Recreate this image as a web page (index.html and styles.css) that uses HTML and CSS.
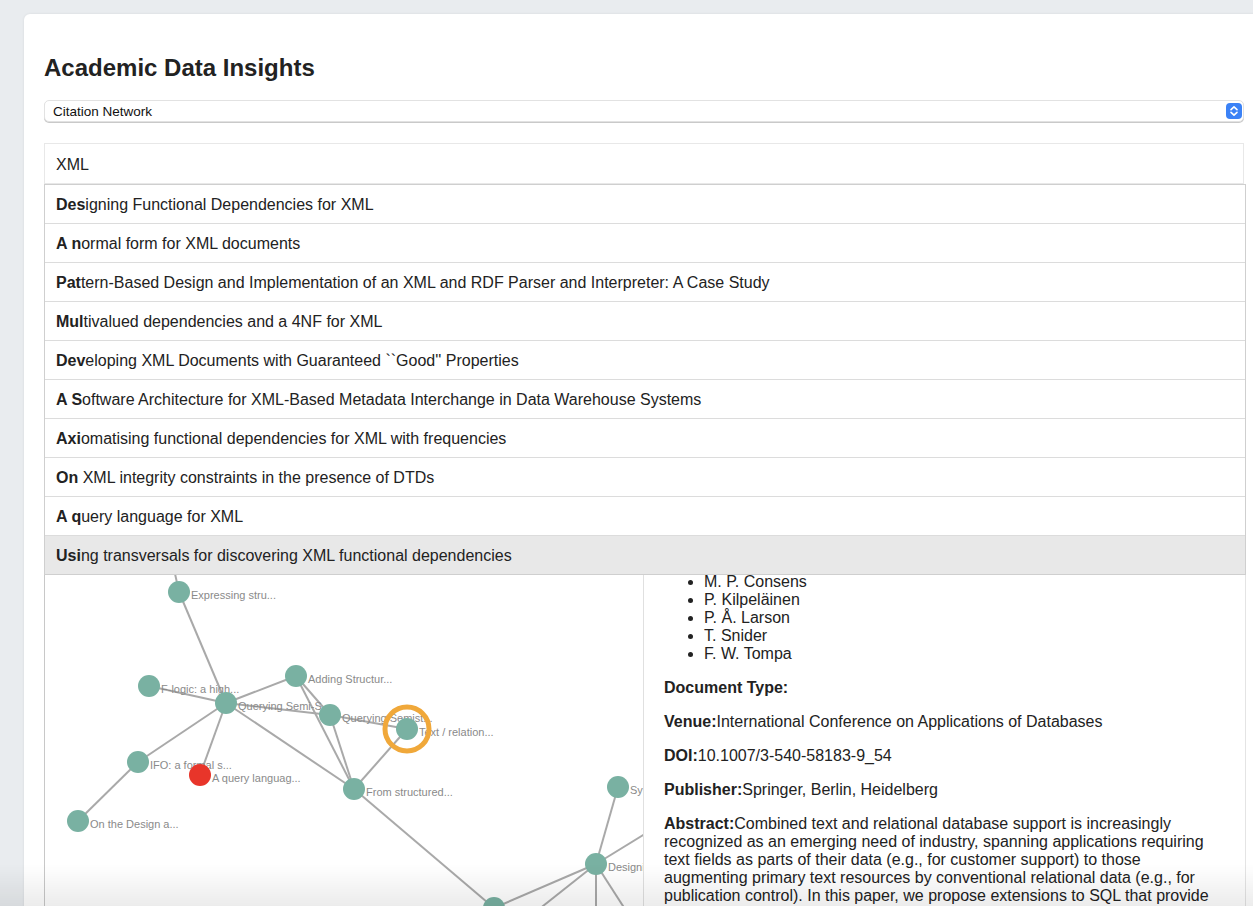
FILE: index.html
```html
<!DOCTYPE html>
<html lang="en">
<head>
<meta charset="utf-8">
<title>Academic Data Insights</title>
<link rel="stylesheet" href="styles.css">
</head>
<body>
<div class="card">
  <h1 class="title">Academic Data Insights</h1>

  <div class="select-wrap">
    <select class="view-select">
      <option>Citation Network</option>
      <option>Author Collaboration</option>
      <option>Topic Trends</option>
    </select>
    <span class="select-icon">
      <svg width="16" height="16" viewBox="0 0 16 16">
        <rect x="0" y="0" width="16" height="16" rx="4" fill="#3b82f6"/>
        <path d="M5 6.6 L8 3.8 L11 6.6" fill="none" stroke="#fff" stroke-width="1.6" stroke-linecap="round" stroke-linejoin="round"/>
        <path d="M5 9.4 L8 12.2 L11 9.4" fill="none" stroke="#fff" stroke-width="1.6" stroke-linecap="round" stroke-linejoin="round"/>
      </svg>
    </span>
  </div>

  <div class="search">
    <input class="search-input" type="text" value="XML">
    <ul class="suggestions">
      <li class="suggestion"><b>Des</b>igning Functional Dependencies for XML</li>
      <li class="suggestion"><b>A n</b>ormal form for XML documents</li>
      <li class="suggestion"><b>Pat</b>tern-Based Design and Implementation of an XML and RDF Parser and Interpreter: A Case Study</li>
      <li class="suggestion"><b>Mul</b>tivalued dependencies and a 4NF for XML</li>
      <li class="suggestion"><b>Dev</b>eloping XML Documents with Guaranteed ``Good'' Properties</li>
      <li class="suggestion"><b>A S</b>oftware Architecture for XML-Based Metadata Interchange in Data Warehouse Systems</li>
      <li class="suggestion"><b>Axi</b>omatising functional dependencies for XML with frequencies</li>
      <li class="suggestion"><b>On </b>XML integrity constraints in the presence of DTDs</li>
      <li class="suggestion"><b>A q</b>uery language for XML</li>
      <li class="suggestion suggestion-active"><b>Usi</b>ng transversals for discovering XML functional dependencies</li>
    </ul>
  </div>

  <div class="panels">
    <div class="graph-panel">
      <svg class="graph" width="598" height="758" viewBox="0 0 598 758">
        <g transform="translate(-45 -201)">
          <g class="links">
            <line x1="160" y1="505" x2="179" y2="592"/>
            <line x1="179" y1="592" x2="226" y2="703"/>
            <line x1="149" y1="686" x2="226" y2="703"/>
            <line x1="226" y1="703" x2="296" y2="676"/>
            <line x1="226" y1="703" x2="330" y2="715"/>
            <line x1="226" y1="703" x2="138" y2="762"/>
            <line x1="226" y1="703" x2="200" y2="775"/>
            <line x1="226" y1="703" x2="354" y2="789"/>
            <line x1="296" y1="676" x2="330" y2="715"/>
            <line x1="296" y1="676" x2="354" y2="789"/>
            <line x1="330" y1="715" x2="354" y2="789"/>
            <line x1="330" y1="715" x2="407" y2="729"/>
            <line x1="407" y1="729" x2="354" y2="789"/>
            <line x1="138" y1="762" x2="78" y2="821"/>
            <line x1="354" y1="789" x2="494" y2="908"/>
            <line x1="494" y1="908" x2="596" y2="864"/>
            <line x1="494" y1="908" x2="450" y2="980"/>
            <line x1="596" y1="864" x2="618" y2="787"/>
            <line x1="596" y1="864" x2="700" y2="800"/>
            <line x1="596" y1="864" x2="490" y2="948"/>
            <line x1="596" y1="864" x2="596" y2="980"/>
            <line x1="596" y1="864" x2="650" y2="948"/>
          </g>
          <g class="labels">
            <text x="172" y="513">Semistructured...</text>
            <text x="191" y="599">Expressing stru...</text>
            <text x="161" y="693">F-logic: a high...</text>
            <text x="238" y="710">Querying Semi-S...</text>
            <text x="308" y="683">Adding Structur...</text>
            <text x="342" y="722">Querying Semist...</text>
            <text x="419" y="736">Text / relation...</text>
            <text x="366" y="796">From structured...</text>
            <text x="150" y="769">IFO: a formal s...</text>
            <text x="212" y="782">A query languag...</text>
            <text x="90" y="828">On the Design a...</text>
            <text x="630" y="794">Syntax and sem...</text>
            <text x="608" y="871">Designing Func...</text>
            <text x="506" y="915">XML-based dat...</text>
          </g>
          <g class="nodes">
            <circle cx="160" cy="505" r="11"/>
            <circle cx="179" cy="592" r="11"/>
            <circle cx="149" cy="686" r="11"/>
            <circle cx="226" cy="703" r="11"/>
            <circle cx="296" cy="676" r="11"/>
            <circle cx="330" cy="715" r="11"/>
            <circle cx="407" cy="729" r="11"/>
            <circle cx="354" cy="789" r="11"/>
            <circle cx="138" cy="762" r="11"/>
            <circle class="node-query" cx="200" cy="775" r="11"/>
            <circle cx="78" cy="821" r="11"/>
            <circle cx="618" cy="787" r="11"/>
            <circle cx="596" cy="864" r="11"/>
            <circle cx="494" cy="908" r="11"/>
            <circle class="node-ring" cx="407" cy="729" r="22"/>
          </g>
        </g>
      </svg>
    </div>

    <div class="details-panel">
      <h2 class="details-title">Text / Relational Database Management Systems: Harmonizing SQL and SGML</h2>
      <p><b>Year:</b>1994</p>
      <p><b>Citations:</b>10</p>
      <p><b>References:</b>8</p>
      <p><b>Pages:</b>583-594</p>
      <p><b>Volume:</b>819</p>
      <p><b>Language:</b>en</p>
      <p><b>Keywords:</b>SQL, SGML</p>
      <p><b>Authors:</b></p>
      <ul class="authors">
        <li>G. E. Blake</li>
        <li>M. P. Consens</li>
        <li>P. Kilpeläinen</li>
        <li>P. Å. Larson</li>
        <li>T. Snider</li>
        <li>F. W. Tompa</li>
      </ul>
      <p><b>Document Type:</b></p>
      <p><b>Venue:</b>International Conference on Applications of Databases</p>
      <p><b>DOI:</b>10.1007/3-540-58183-9_54</p>
      <p><b>Publisher:</b>Springer, Berlin, Heidelberg</p>
      <p><b>Abstract:</b>Combined text and relational database support is increasingly recognized as an emerging need of industry, spanning applications requiring text fields as parts of their data (e.g., for customer support) to those augmenting primary text resources by conventional relational data (e.g., for publication control). In this paper, we propose extensions to SQL that provide flexible and efficient access to structured documents and their component parts, while preserving the familiar relational view of data.</p>
    </div>
  </div>
</div>
<div class="bottom-shade"></div>
</body>
</html>
```

FILE: styles.css
```css
html {
  overflow: hidden;
}

body {
  margin: 0;
  background: #e9ecef;
  font-family: "Liberation Sans", Arial, Helvetica, sans-serif;
  color: #222;
}

.card {
  box-sizing: border-box;
  width: 1240px;
  margin: 14px 0 0 24px;
  padding: 20px;
  background: #fff;
  border-radius: 6px;
  box-shadow: 0 0 3px rgba(0, 0, 0, 0.08);
}

.title {
  margin: 20px 0 18px;
  font-size: 24px;
  line-height: 28px;
  font-weight: bold;
  color: #222;
}

.select-wrap {
  position: relative;
  margin-bottom: 21px;
}

.view-select {
  -webkit-appearance: none;
  appearance: none;
  display: block;
  box-sizing: border-box;
  width: 100%;
  height: 22px;
  margin: 0;
  padding: 1px 8px 0;
  border: 1px solid #e2e2e2;
  border-radius: 5px;
  box-shadow: 0 1px 0 #c9c9c9;
  background: #fff;
  font-family: "Liberation Sans", Arial, sans-serif;
  font-size: 13.5px;
  color: #111;
}

.select-icon {
  position: absolute;
  top: 3px;
  right: 2px;
  width: 16px;
  height: 16px;
  pointer-events: none;
}

.select-icon svg {
  display: block;
}

.search {
  position: relative;
}

.search-input {
  display: block;
  box-sizing: border-box;
  width: 100%;
  height: 41px;
  margin: 0;
  padding: 2px 11px 0;
  border: 1px solid #e8e8e8;
  border-radius: 0;
  outline: none;
  background: #fff;
  font-family: "Liberation Sans", Arial, sans-serif;
  font-size: 16px;
  color: #222;
}

.suggestions {
  position: absolute;
  top: 100%;
  left: 0;
  width: 100%;
  margin: 0;
  padding: 0;
  list-style: none;
  background: #fff;
  border: 1px solid #cfcfcf;
  z-index: 10;
}

.suggestion {
  padding: 11px 11px 9px;
  font-size: 16px;
  line-height: 18px;
  color: #222;
  border-bottom: 1px solid #dcdcdc;
  white-space: nowrap;
}

.suggestion:last-child {
  border-bottom: none;
}

.suggestion-active {
  background: #e8e8e8;
}

.panels {
  display: flex;
  margin-top: 16px;
  margin-right: -2px;
  height: 760px;
}

.graph-panel {
  flex: none;
  box-sizing: border-box;
  width: 600px;
  border: 1px solid #c8c8c8;
  border-right-color: #e0e0e0;
  overflow: hidden;
}

.graph {
  display: block;
}

.links line {
  stroke: #a9a9a9;
  stroke-width: 2;
}

.labels text {
  font-family: "Liberation Sans", Arial, sans-serif;
  font-size: 11px;
  fill: #8a8a8a;
}

.nodes circle {
  fill: #79b1a2;
}

.nodes .node-query {
  fill: #e8352a;
}

.nodes .node-ring {
  fill: none;
  stroke: #f0a83a;
  stroke-width: 5;
}

.details-panel {
  flex: 1;
  box-sizing: border-box;
  padding: 18px 20px 20px;
  border: 1px solid #e4e4e4;
  border-left: none;
  overflow: hidden;
  font-size: 16px;
  line-height: 18px;
  color: #222;
}

.details-title {
  margin: 0 0 16px;
  font-size: 20px;
  line-height: 24px;
}

.details-panel p {
  margin: 16px 0;
}

.authors {
  margin: 16px 0;
  padding-left: 40px;
}

.bottom-shade {
  position: fixed;
  left: 0;
  right: 0;
  bottom: 0;
  height: 42px;
  background: linear-gradient(to bottom, rgba(0, 0, 0, 0), rgba(0, 0, 0, 0.075));
  pointer-events: none;
  z-index: 20;
}
```
